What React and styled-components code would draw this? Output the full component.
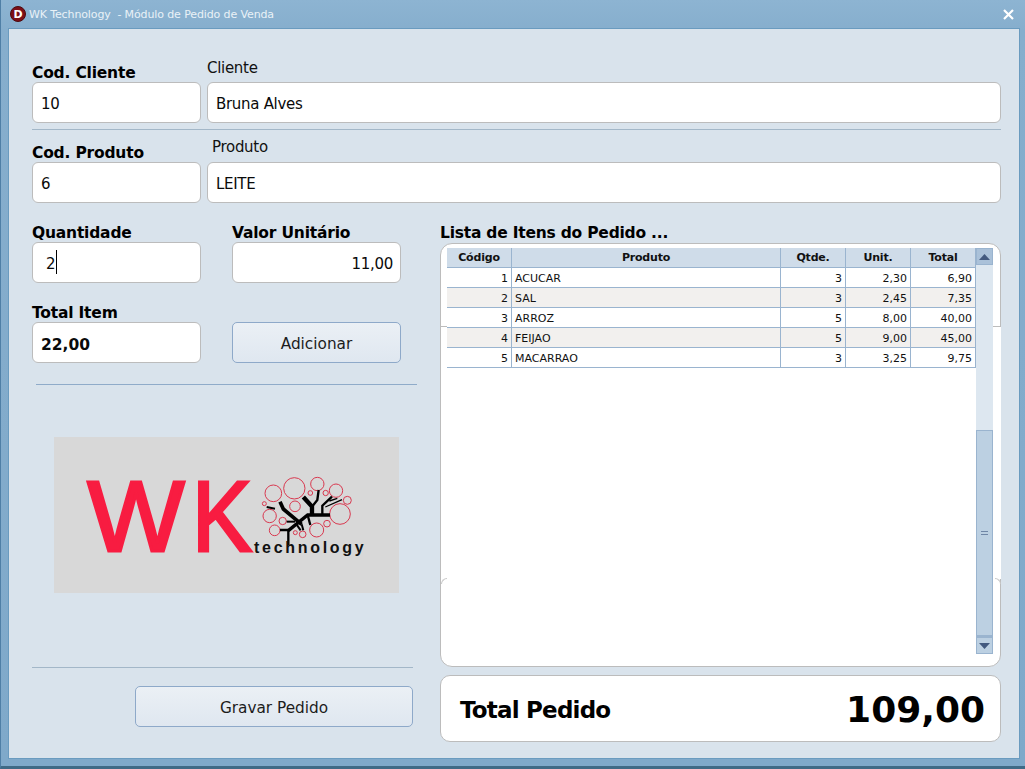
import React from 'react'
import styled, { createGlobalStyle } from 'styled-components'

const font = '"DejaVu Sans", Verdana, sans-serif'

const GlobalStyle = createGlobalStyle`
    html, body {
        margin: 0;
        padding: 0;
        background: #3c5a68;
    }
    * {
        box-sizing: border-box;
    }
`

const Window = styled.div`
    width: 1025px;
    height: 769px;
    display: flex;
    flex-direction: column;
    overflow: hidden;
    padding: 0 5px 7px 7px;
    background: linear-gradient(180deg, #8db4d2 0%, #86aecd 4%, #7fa9ca 100%);
    border-left: 1px solid #4f7fa6;
    border-bottom: 3px solid #3f6a86;
    font-family: ${font};
`

const TitleBar = styled.div`
    height: 28px;
    flex: none;
    display: flex;
    align-items: center;
    gap: 3px;
    margin: 0 0 0 2px;
    color: #e9f1f7;
    font-size: 11px;
    letter-spacing: -0.12px;
    white-space: pre;
`

const AppIcon = styled.div`
    width: 16px;
    height: 16px;
    border-radius: 50%;
    display: flex;
    align-items: center;
    justify-content: center;
    background: #7c0f17;
    border: 1px solid #4c0a0e;
    color: #fff;
    font-size: 11px;
    font-weight: 700;
`

const CloseIcon = styled.svg`
    width: 11px;
    height: 11px;
    margin-left: auto;
    margin-right: 6px;
`

const Client = styled.div`
    flex: 1;
    padding: 29px 18px 0 23px;
    background: #d9e3ec;
    border: 1px solid #6a9bbf;
`

const FieldRow = styled.div`
    display: grid;
    grid-template-columns: 169px 1fr;
    column-gap: 6px;
    align-items: end;
    margin-top: ${({ $top }) => $top || 0}px;
`

const Col = styled.div`
    display: flex;
    flex-direction: column;
`

const BoldLabel = styled.div`
    height: 20px;
    line-height: 22px;
    font-size: 15.5px;
    letter-spacing: -0.2px;
    font-weight: 700;
    color: #000;
    white-space: nowrap;
`

const PlainLabel = styled.div`
    height: 20px;
    line-height: 20px;
    font-size: 15px;
    letter-spacing: -0.3px;
    color: #111;
    margin-bottom: ${({ $gap }) => $gap || 0}px;
    padding-left: ${({ $indent }) => $indent || 0}px;
`

const Input = styled.div`
    height: 41px;
    display: flex;
    align-items: center;
    justify-content: ${({ $right }) => ($right ? 'flex-end' : 'flex-start')};
    padding: ${({ $bold }) => ($bold ? 5 : 3)}px 7px 0 ${({ $indent }) => $indent || 8}px;
    background: #fff;
    border: 1px solid #bcbcbc;
    border-radius: 6px;
    font-size: ${({ $bold }) => ($bold ? 15.5 : 15)}px;
    letter-spacing: ${({ $bold }) => ($bold ? 0 : -0.3)}px;
    font-weight: ${({ $bold }) => ($bold ? 700 : 400)};
    color: #0a0a0a;
`

const Caret = styled.span`
    width: 1px;
    height: 24px;
    margin: -4px 0 0 1px;
    background: #000;
`

const Hr = styled.div`
    height: 1px;
    background: ${({ $soft }) => ($soft ? '#a3b7c8' : '#8fabc9')};
    margin-top: ${({ $top }) => $top}px;
    margin-left: ${({ $left }) => $left || 0}px;
    width: ${({ $width }) => ($width ? `${$width}px` : 'auto')};
`

const Main = styled.div`
    display: grid;
    grid-template-columns: 385px 561px;
    column-gap: 23px;
    margin-top: 19px;
`

const FormGrid = styled.div`
    display: grid;
    grid-template-columns: 169px 169px;
    column-gap: 31px;
    row-gap: 19px;
`

const Button = styled.button`
    display: block;
    height: 41px;
    padding: 2px 0 0;
    width: ${({ $width }) => ($width ? `${$width}px` : '100%')};
    margin-left: ${({ $left }) => $left || 0}px;
    margin-top: ${({ $top }) => $top || 0}px;
    background: linear-gradient(180deg, #ebf0f5 0%, #dfe7f0 100%);
    border: 1px solid #8ea9c9;
    border-radius: 5px;
    font-family: ${font};
    font-size: 15.3px;
    color: #1c1c1c;
`

const AddCol = styled.div`
    display: flex;
    align-items: flex-end;
`

const LogoBox = styled.svg`
    display: block;
    width: 345px;
    height: 156px;
    margin: 52px 0 0 22px;
    background: #d8d8d8;
`

const ListTitle = styled.div`
    height: 21px;
    line-height: 23px;
    font-size: 15.5px;
    letter-spacing: -0.22px;
    font-weight: 700;
    color: #000;
`

const ListPanel = styled.div`
    position: relative;
    height: 424px;
    padding: 4px 7px 4px 6px;
    display: flex;
    background: #fff;
    border: 1px solid #bcbcbc;
    border-radius: 12px;
`

const RightGap = styled.div`
    position: absolute;
    right: -1px;
    top: 83px;
    width: 1px;
    height: 252px;
    background: #fff;
`

const Seam = styled.div`
    position: absolute;
    top: 82px;
    height: 1px;
    background: #bcbcbc;
    left: ${({ $left }) => ($left ? '0' : 'auto')};
    right: ${({ $left }) => ($left ? 'auto' : '0')};
    width: ${({ $left }) => ($left ? 6 : 7)}px;
`

const Corner = styled.div`
    position: absolute;
    top: 334px;
    width: 6px;
    height: 6px;
    left: ${({ $left }) => ($left ? '0' : 'auto')};
    right: ${({ $left }) => ($left ? 'auto' : '-1px')};
    border-top: 1px solid #c8c8c8;
    border-left: ${({ $left }) => ($left ? '1px solid #c8c8c8' : 'none')};
    border-right: ${({ $left }) => ($left ? 'none' : '1px solid #c8c8c8')};
    border-radius: ${({ $left }) => ($left ? '6px 0 0 0' : '0 6px 0 0')};
`

const GridTable = styled.table`
    width: 529px;
    height: 120px;
    flex: none;
    table-layout: fixed;
    border-collapse: separate;
    border-spacing: 0;
    font-size: 11px;
    color: #111;
`

const Th = styled.th`
    height: 20px;
    padding: 0;
    text-align: center;
    font-weight: 700;
    letter-spacing: -0.2px;
    background: #cfdce9;
    border-right: 1px solid #9ab4cf;
    border-bottom: 1px solid #9ab4cf;
`

const Td = styled.td`
    height: 20px;
    padding: 1px 3px 0;
    text-align: ${({ $right }) => ($right ? 'right' : 'left')};
    background: ${({ $alt }) => ($alt ? '#f2f0ee' : '#fff')};
    border-right: 1px solid #9ab4cf;
    border-bottom: 1px solid #9ab4cf;
`

const ScrollBar = styled.div`
    width: 17px;
    height: 406px;
    flex: none;
    display: flex;
    flex-direction: column;
    background: #dde7f0;
`

const ScrollBtn = styled.div`
    height: 17px;
    flex: none;
    display: flex;
    align-items: center;
    justify-content: center;
    background: ${({ $pressed }) => ($pressed ? '#aac1d9' : '#bcd0e2')};
    border: 1px solid #9ab4cf;
`

const ArrowIcon = styled.svg`
    width: 11px;
    height: 6px;
    fill: #42597f;
`

const ScrollGap = styled.div`
    height: 165px;
    flex: none;
`

const ScrollThumb = styled.div`
    flex: 1;
    display: flex;
    align-items: center;
    justify-content: center;
    background: #bcd0e2;
    border: 1px solid #9ab4cf;
    border-bottom: 2px solid #9ab4cf;
`

const Grip = styled.div`
    width: 7px;
    height: 4px;
    border-top: 1px solid #6f86a6;
    border-bottom: 1px solid #6f86a6;
`

const TotalPanel = styled.div`
    height: 67px;
    margin-top: 8px;
    padding: 2px 15px 0 19px;
    display: flex;
    align-items: center;
    justify-content: space-between;
    background: #fff;
    border: 1px solid #bcbcbc;
    border-radius: 10px;
    color: #000;
    font-weight: 700;
`

const TotalLabel = styled.div`
    font-size: 23px;
    letter-spacing: -0.8px;
`

const TotalValue = styled.div`
    font-size: 36px;
`

const items = [
  ['1', 'ACUCAR', '3', '2,30', '6,90'],
  ['2', 'SAL', '3', '2,45', '7,35'],
  ['3', 'ARROZ', '5', '8,00', '40,00'],
  ['4', 'FEIJAO', '5', '9,00', '45,00'],
  ['5', 'MACARRAO', '3', '3,25', '9,75'],
]

const bubbles = [
  [100, 85, 25], [163, 70, 32], [232, 57, 20], [288, 77, 20], [322, 106, 12],
  [300, 147, 31], [165, 124, 16], [73, 116, 6], [89, 153, 20], [128, 168, 11],
  [104, 196, 16], [166, 203, 6], [188, 208, 10], [230, 195, 21], [261, 176, 10],
  [211, 84, 7], [257, 84, 8],
]

const branches = [
  ['M145 240V195H120', 7],
  ['M80 126L105 131', 6],
  ['M120 110L130 132L185 178', 11],
  ['M145 197L203 150H270', 10],
  ['M190 96L216 125V150', 13],
  ['M236 75L232 105L216 125', 7],
  ['M247 150V122L276 95', 7],
  ['M256 126L306 104', 4],
  ['M268 108L292 100', 4],
  ['M203 150L211 180', 7],
  ['M165 170H140', 6],
  ['M168 176L182 196', 6],
  ['M185 178L190 196', 6],
]

const Logo = () => (
  <LogoBox viewBox="0 0 345 156">
    <text x="33.5" y="113.5" fontFamily="Liberation Sans" fontSize="100" fill="#f81c41" stroke="#f81c41" strokeWidth="3" textLength="97" lengthAdjust="spacingAndGlyphs">W</text>
    <text x="138" y="113.5" fontFamily="Liberation Sans" fontSize="100" fill="#f81c41" stroke="#f81c41" strokeWidth="3" textLength="60" lengthAdjust="spacingAndGlyphs">K</text>
    <g transform="translate(186 28) scale(0.3333)">
      {bubbles.map(([cx, cy, r]) => (
        <circle key={`${cx}-${cy}`} cx={cx} cy={cy} r={r} fill="none" stroke="#d8384f" strokeWidth="3" />
      ))}
      {branches.map(([d, w]) => (
        <path key={d} d={d} fill="none" stroke="#000" strokeWidth={w} />
      ))}
    </g>
    <text x="200" y="116" fontFamily="Liberation Sans" fontWeight="700" fontSize="16" letterSpacing="2.7" fill="#111">technology</text>
  </LogoBox>
)

const App = () => {
  return (
    <Window>
      <GlobalStyle />
      <TitleBar>
        <AppIcon>D</AppIcon>
        WK Technology  - Módulo de Pedido de Venda
        <CloseIcon viewBox="0 0 11 11">
          <path d="M1 1L10 10M10 1L1 10" stroke="#fff" strokeWidth="2.2" fill="none" />
        </CloseIcon>
      </TitleBar>
      <Client>
        <FieldRow>
          <Col>
            <BoldLabel>Cod. Cliente</BoldLabel>
            <Input>10</Input>
          </Col>
          <Col>
            <PlainLabel $gap={4}>Cliente</PlainLabel>
            <Input>Bruna Alves</Input>
          </Col>
        </FieldRow>
        <Hr $soft $top={6} />
        <FieldRow $top={7}>
          <Col>
            <BoldLabel>Cod. Produto</BoldLabel>
            <Input>6</Input>
          </Col>
          <Col>
            <PlainLabel $gap={5} $indent={5}>Produto</PlainLabel>
            <Input>LEITE</Input>
          </Col>
        </FieldRow>
        <Main>
          <div>
            <FormGrid>
              <Col>
                <BoldLabel>Quantidade</BoldLabel>
                <Input $indent={13}>2<Caret /></Input>
              </Col>
              <Col>
                <BoldLabel>Valor Unitário</BoldLabel>
                <Input $right>11,00</Input>
              </Col>
              <Col>
                <BoldLabel>Total Item</BoldLabel>
                <Input $bold>22,00</Input>
              </Col>
              <AddCol>
                <Button>Adicionar</Button>
              </AddCol>
            </FormGrid>
            <Hr $top={21} $left={4} />
            <Logo />
            <Hr $soft $top={74} $width={381} />
            <Button $top={18} $left={103} $width={278}>Gravar Pedido</Button>
          </div>
          <div>
            <ListTitle>Lista de Itens do Pedido ...</ListTitle>
            <ListPanel>
              <GridTable>
                <colgroup>
                  <col width="65" />
                  <col width="269" />
                  <col width="65" />
                  <col width="65" />
                  <col width="65" />
                </colgroup>
                <thead>
                  <tr>
                    <Th>Código</Th>
                    <Th>Produto</Th>
                    <Th>Qtde.</Th>
                    <Th>Unit.</Th>
                    <Th>Total</Th>
                  </tr>
                </thead>
                <tbody>
                  {items.map((row, i) => (
                    <tr key={row[0]}>
                      <Td $right $alt={i % 2 === 1}>{row[0]}</Td>
                      <Td $alt={i % 2 === 1}>{row[1]}</Td>
                      <Td $right $alt={i % 2 === 1}>{row[2]}</Td>
                      <Td $right $alt={i % 2 === 1}>{row[3]}</Td>
                      <Td $right $alt={i % 2 === 1}>{row[4]}</Td>
                    </tr>
                  ))}
                </tbody>
              </GridTable>
              <ScrollBar>
                <ScrollBtn $pressed>
                  <ArrowIcon viewBox="0 0 11 6"><path d="M5.5 0L11 6H0Z" /></ArrowIcon>
                </ScrollBtn>
                <ScrollGap />
                <ScrollThumb><Grip /></ScrollThumb>
                <ScrollBtn>
                  <ArrowIcon viewBox="0 0 11 6"><path d="M0 0H11L5.5 6Z" /></ArrowIcon>
                </ScrollBtn>
              </ScrollBar>
              <RightGap />
              <Seam $left />
              <Seam />
              <Corner $left />
              <Corner />
            </ListPanel>
            <TotalPanel>
              <TotalLabel>Total Pedido</TotalLabel>
              <TotalValue>109,00</TotalValue>
            </TotalPanel>
          </div>
        </Main>
      </Client>
    </Window>
  )
}

export default App
